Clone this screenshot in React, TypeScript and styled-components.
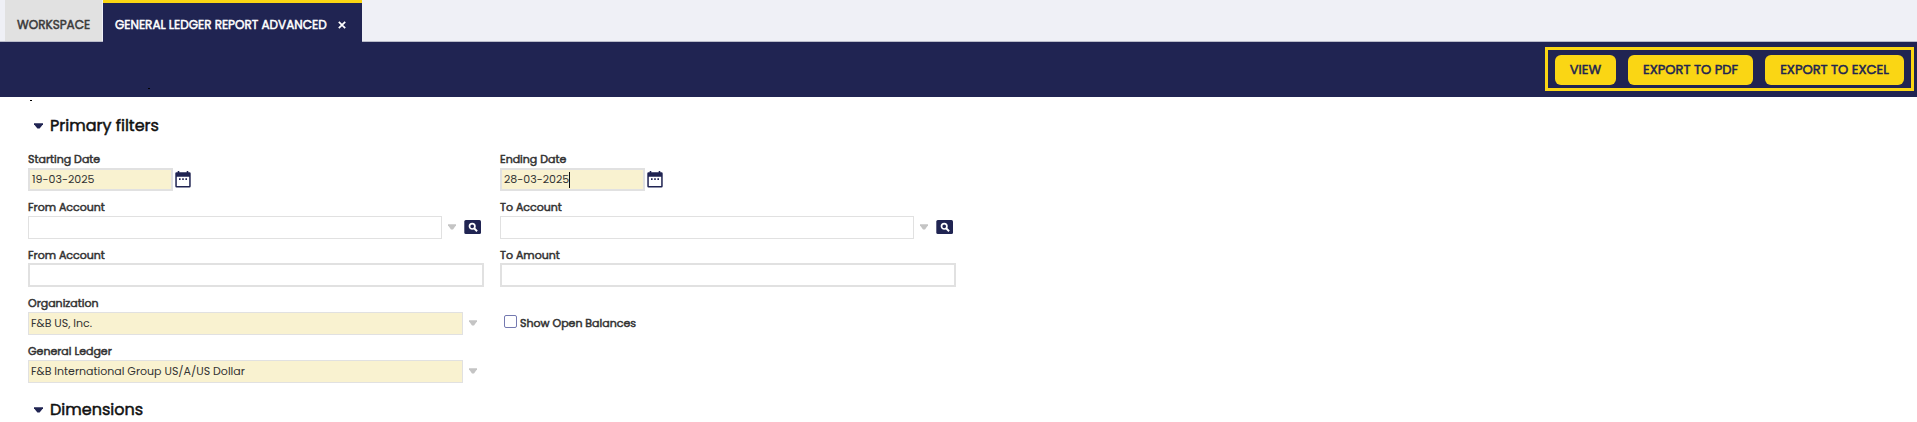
import React from "react";
import styled, { createGlobalStyle } from "styled-components";

const NAVY = "#202452";
const YELLOW = "#fad614";
const LINE = "#e1e1e1";

const GlobalStyle = createGlobalStyle`
  * { box-sizing: border-box; }
  body {
    margin: 0;
    background: #fff;
    color: #333;
    font-family: Poppins, Inter, "Open Sans", sans-serif;
    font-size: 11px;
    overflow: hidden;
  }
`;

const Page = styled.div`
  position: relative;
  width: 1917px;
  height: 422px;
  overflow: hidden;
`;

const Text = styled.span<{ $bold?: boolean }>`
  -webkit-text-stroke: ${(p) => (p.$bold ? "0.5px currentColor" : "0")};
  white-space: nowrap;
`;

const TabStrip = styled.nav`
  display: flex;
  gap: 1px;
  height: 42px;
  padding-left: 5px;
  background: #eff0f6;
  box-shadow: inset 0 -1px 0 #b9bbc9;
`;

const Tab = styled.div<{ $active?: boolean }>`
  display: flex;
  align-items: center;
  width: ${(p) => (p.$active ? 259 : 97)}px;
  height: ${(p) => (p.$active ? 42 : 41)}px;
  padding: ${(p) => (p.$active ? "4px 0 0 12px" : "8px 0 0 12px")};
  border-top: ${(p) => (p.$active ? `3px solid ${YELLOW}` : "0")};
  background: ${(p) => (p.$active ? NAVY : "#e1e1e1")};
  color: ${(p) => (p.$active ? "#fff" : "#3a3a3a")};
  font-size: 12px;
`;

const CloseIcon = styled.svg`
  width: 8px;
  height: 8px;
  margin-left: auto;
  margin-right: 16px;
`;

const Toolbar = styled.header`
  display: flex;
  justify-content: flex-end;
  align-items: flex-start;
  height: 55px;
  padding: 5px 3px 0 0;
  background: ${NAVY};
`;

const ButtonGroup = styled.div`
  display: flex;
  gap: 12px;
  width: 369px;
  height: 44px;
  padding: 5px 7px;
  border: 3px solid ${YELLOW};
`;

const ActionButton = styled.button<{ $width: number }>`
  width: ${(p) => p.$width}px;
  height: 30px;
  padding: 0;
  border: 0;
  border-radius: 6px;
  background: ${YELLOW};
  color: ${NAVY};
  font: 400 13px Poppins, Inter, sans-serif;
`;

const Section = styled.h2`
  display: flex;
  align-items: center;
  gap: 7px;
  height: 28px;
  margin: 0;
  padding-left: 34px;
  color: #111;
  font-size: 16px;
  font-weight: 400;
`;

const Form = styled.main`
  padding-top: 14px;
`;

const Grid = styled.div`
  display: grid;
  grid-template-columns: 456px 456px;
  grid-auto-rows: 48px;
  column-gap: 16px;
  padding: 11px 0 0 28px;
  height: 256px;
`;

const Field = styled.div`
  display: flex;
  flex-direction: column;
`;

const Label = styled.label`
  height: 18px;
  font-size: 11px;
  line-height: 18px;
`;

const Control = styled.div`
  display: flex;
  align-items: center;
`;

const Input = styled.div<{ $width: number; $filled?: boolean; $thick?: boolean; $tall?: boolean }>`
  display: flex;
  align-items: center;
  width: ${(p) => p.$width}px;
  height: ${(p) => (p.$tall ? 24 : 23)}px;
  margin-top: ${(p) => (p.$tall ? -1 : 0)}px;
  padding-left: 2px;
  border: ${(p) => (p.$thick ? 2 : 1)}px solid ${LINE};
  background: ${(p) => (p.$filled ? "#f9f2d0" : "#fff")};
`;

const Caret = styled.i`
  width: 1px;
  height: 16px;
  background: #111;
`;

const Arrow = styled.svg<{ $gap: number; $width: number }>`
  width: ${(p) => p.$width}px;
  height: 6px;
  margin-left: ${(p) => p.$gap}px;
  margin-bottom: 1px;

  ${Section} & {
    margin-top: 2px;
    margin-bottom: 0;
  }
`;

const CalendarSvg = styled.svg`
  width: 16px;
  height: 17px;
  margin-left: 2px;
`;

const SearchSvg = styled.svg`
  width: 17px;
  height: 14px;
  margin-left: 8px;
  margin-bottom: 1px;
`;

const CheckRow = styled.label`
  display: flex;
  gap: 3px;
  padding: 21px 0 0 4px;
  line-height: 16px;
`;

const Checkbox = styled.span`
  width: 13px;
  height: 13px;
  border: 1px solid #7479b0;
  border-radius: 2px;
`;

const Speck = styled.i<{ $x: number; $y: number }>`
  position: absolute;
  left: ${(p) => p.$x}px;
  top: ${(p) => p.$y}px;
  width: 2px;
  height: 1px;
  background: #000;
`;

const Calendar = () => (
  <CalendarSvg viewBox="0 0 16 17">
    <path
      d="M2.700 0h1.600v1.200h7.400V0h1.600v1.200h1.200Q15.700 1.200 15.700 2.500V15.300Q15.700 16.600 14.400 16.600H1.600Q.3 16.600 .3 15.300V2.500Q.3 1.200 1.600 1.200h1.100ZM1.800 5.700v9.400h12.400V5.700Z"
      fill={NAVY}
      fillRule="evenodd"
    />
    <path d="M4 7.300h1.600v1.600H4zM7.200 7.300h1.600v1.600H7.200zM10.400 7.300H12v1.600h-1.600z" fill={NAVY} />
  </CalendarSvg>
);

const Search = () => (
  <SearchSvg viewBox="0 0 17 14">
    <rect x=".3" width="16.7" height="14" rx="1.5" fill={NAVY} />
    <circle cx="8.200" cy="6.300" r="2.700" fill="none" stroke="#fff" strokeWidth="1.700" />
    <path d="M10.100 8.300l3 2.900" stroke="#fff" strokeWidth="1.900" />
  </SearchSvg>
);

const Down = ({ gap = 0, width = 8, color = "#c4c4c4" }: { gap?: number; width?: number; color?: string }) => (
  <Arrow $gap={gap} $width={width} viewBox="0 0 8 6" preserveAspectRatio="none">
    <path d="M0 .300h8V1.200L5 5.500H3L0 1.200Z" fill={color} />
  </Arrow>
);

export default function App() {
  return (
    <Page>
      <GlobalStyle />
      <TabStrip>
        <Tab><Text $bold>WORKSPACE</Text></Tab>
        <Tab $active>
          <Text $bold>GENERAL LEDGER REPORT ADVANCED</Text>
          <CloseIcon viewBox="0 0 8 8"><path d="M.8.8l6.400 6.400M7.200.8L.8 7.200" stroke="#fff" strokeWidth="1.700" /></CloseIcon>
        </Tab>
      </TabStrip>
      <Toolbar>
        <ButtonGroup>
          <ActionButton $width={61}><Text $bold>VIEW</Text></ActionButton>
          <ActionButton $width={125}><Text $bold>EXPORT TO PDF</Text></ActionButton>
          <ActionButton $width={139}><Text $bold>EXPORT TO EXCEL</Text></ActionButton>
        </ButtonGroup>
      </Toolbar>
      <Form>
        <Section><Down color={NAVY} width={9} /><Text $bold>Primary filters</Text></Section>
        <Grid>
          <Field>
            <Label><Text $bold>Starting Date</Text></Label>
            <Control><Input $width={145} $filled $thick><Text>19-03-2025</Text></Input><Calendar /></Control>
          </Field>
          <Field>
            <Label><Text $bold>Ending Date</Text></Label>
            <Control><Input $width={145} $filled $thick><Text>28-03-2025</Text><Caret /></Input><Calendar /></Control>
          </Field>
          <Field>
            <Label><Text $bold>From Account</Text></Label>
            <Control><Input $width={414} /><Down gap={6} /><Search /></Control>
          </Field>
          <Field>
            <Label><Text $bold>To Account</Text></Label>
            <Control><Input $width={414} /><Down gap={6} /><Search /></Control>
          </Field>
          <Field>
            <Label><Text $bold>From Account</Text></Label>
            <Control><Input $width={456} $thick $tall /></Control>
          </Field>
          <Field>
            <Label><Text $bold>To Amount</Text></Label>
            <Control><Input $width={456} $thick $tall /></Control>
          </Field>
          <Field>
            <Label><Text $bold>Organization</Text></Label>
            <Control><Input $width={435} $filled><Text>F&amp;B US, Inc.</Text></Input><Down gap={6} /></Control>
          </Field>
          <CheckRow><Checkbox /><Text $bold>Show Open Balances</Text></CheckRow>
          <Field>
            <Label><Text $bold>General Ledger</Text></Label>
            <Control><Input $width={435} $filled><Text>F&amp;B International Group US/A/US Dollar</Text></Input><Down gap={6} /></Control>
          </Field>
        </Grid>
        <Section><Down color={NAVY} width={9} /><Text $bold>Dimensions</Text></Section>
      </Form>
      <Speck $x={148} $y={88} />
      <Speck $x={30} $y={100} />
    </Page>
  );
}
